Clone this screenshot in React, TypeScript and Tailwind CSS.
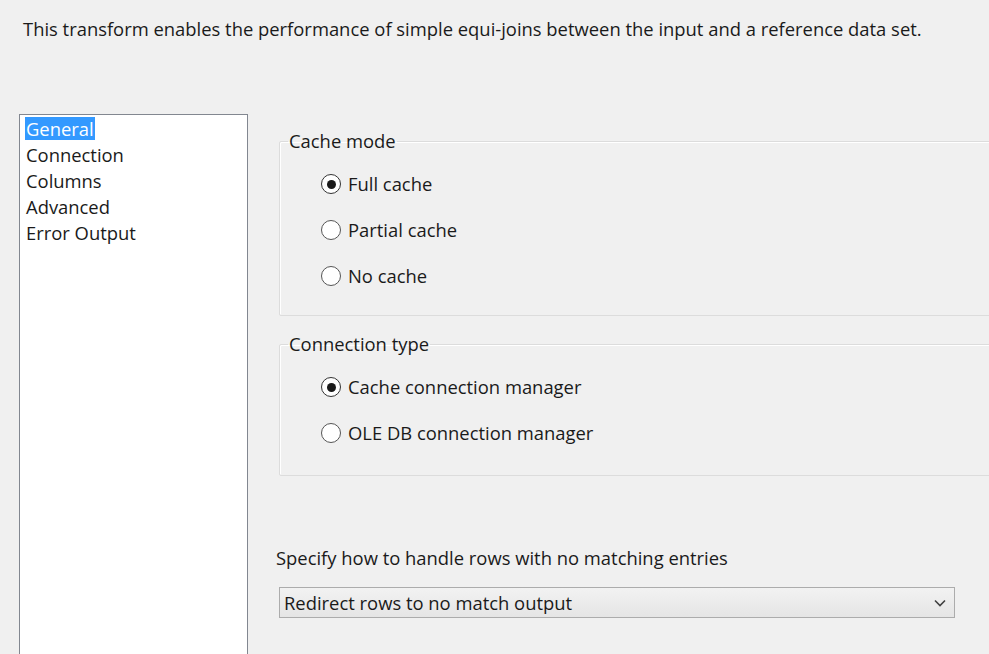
import React from 'react';

const font = { fontFamily: '"Open Sans", "Noto Sans", sans-serif' };

const Radio = ({ label, checked }: { label: string; checked?: boolean }) => (
  <label className="flex items-center h-[24px] ml-[33px]">
    <span
      className={`w-[20px] h-[20px] rounded-full bg-white border flex items-center justify-center ${
        checked ? 'border-[#333]' : 'border-[#555]'
      }`}
    >
      {checked && <span className="w-[9px] h-[9px] rounded-full bg-[#1a1a1a]" />}
    </span>
    <span className="ml-[7px] text-[18.4px] text-[#1a1a1a]">{label}</span>
  </label>
);

const Group = ({ title, children, className = '' }: { title: string; children: React.ReactNode; className?: string }) => (
  <fieldset className={`border border-[#dcdcdc] rounded-[2px] pl-[8px] pr-0 shadow-[inset_1px_1px_0_#fff] ${className}`}>
    <legend className="px-[1px] h-[24px] leading-[24px] text-[18.4px] text-[#1a1a1a]">{title}</legend>
    {children}
  </fieldset>
);

export default function App() {
  const pages = ['General', 'Connection', 'Columns', 'Advanced', 'Error Output'];
  return (
    <div className="w-[989px] h-[654px] bg-[#f0f0f0] overflow-hidden text-[#1a1a1a]" style={font}>
      <p className="pt-[17px] pl-[23px] text-[18.4px] leading-[24px]">
        This transform enables the performance of simple equi-joins between the input and a reference data set.
      </p>

      <div className="flex mt-[73px]">
        {/* Page list */}
        <div className="ml-[19px] w-[229px] h-[560px] bg-white border border-[#828790] pt-0 pl-[5px] shrink-0">
          {pages.map((p, i) => (
            <div key={p} className="h-[26px] flex items-center">
              <span
                className={`text-[18.4px] leading-[23px] px-[1px] ${i === 0 ? 'bg-[#3399ff] text-white' : 'text-[#1a1a1a]'}`}
              >
                {p}
              </span>
            </div>
          ))}
        </div>

        {/* Options */}
        <div className="ml-[28px] mt-[15px] flex-1 flex flex-col">
          <Group title="Cache mode" className="ml-[3px] -mr-[4px] pb-[27px]">
            <div className="flex flex-col gap-[22px] mt-[19px]">
              <Radio label="Full cache" checked />
              <Radio label="Partial cache" />
              <Radio label="No cache" />
            </div>
          </Group>

          <Group title="Connection type" className="ml-[3px] -mr-[4px] mt-[16px] pb-[30px]">
            <div className="flex flex-col gap-[22px] mt-[19px]">
              <Radio label="Cache connection manager" checked />
              <Radio label="OLE DB connection manager" />
            </div>
          </Group>

          <p className="mt-[70px] text-[18.4px] leading-[24px]">Specify how to handle rows with no matching entries</p>

          <div className="ml-[3px] mt-[17px] w-[676px] h-[31px] border border-[#acacac] bg-gradient-to-b from-[#f2f2f2] to-[#e5e5e5] flex items-center justify-between pl-[4px] pr-[8px]">
            <span className="text-[18.4px]">Redirect rows to no match output</span>
            <svg width="12" height="8" viewBox="0 0 12 8" fill="none">
              <path d="M1 1.5 L6 6.5 L11 1.5" stroke="#404040" strokeWidth="1.6" />
            </svg>
          </div>
        </div>
      </div>
    </div>
  );
}
